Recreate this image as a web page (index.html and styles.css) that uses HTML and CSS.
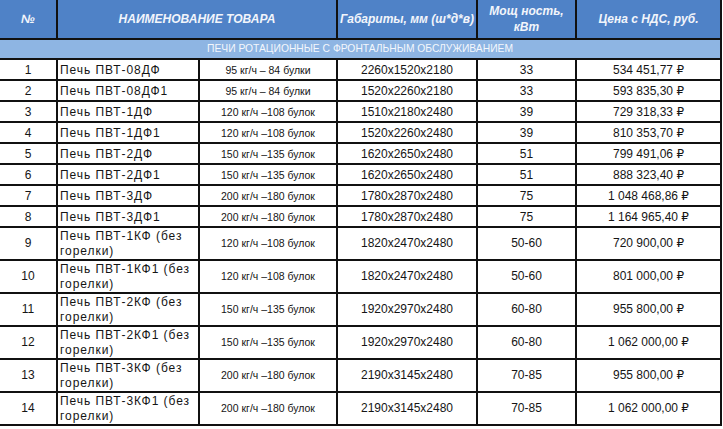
FILE: index.html
```html
<!DOCTYPE html>
<html lang="ru">
<head>
<meta charset="utf-8">
<title>Печи ротационные</title>
<link rel="stylesheet" href="styles.css">
</head>
<body>
<table class="price">
  <colgroup>
    <col class="c-num">
    <col class="c-name">
    <col class="c-cap">
    <col class="c-dim">
    <col class="c-pow">
    <col class="c-price">
  </colgroup>
  <thead>
    <tr class="head">
      <th>№</th>
      <th colspan="2">НАИМЕНОВАНИЕ ТОВАРА</th>
      <th>Габариты, мм (ш*д*в)</th>
      <th>Мощ ность,<br>кВт</th>
      <th>Цена с НДС, руб.</th>
    </tr>
    <tr class="sub">
      <td colspan="6">ПЕЧИ РОТАЦИОННЫЕ С ФРОНТАЛЬНЫМ ОБСЛУЖИВАНИЕМ</td>
    </tr>
  </thead>
  <tbody>
    <tr><td class="num">1</td><td class="name">Печь ПВТ-08ДФ</td><td class="cap">95 кг/ч – 84 булки</td><td class="ctr">2260x1520x2180</td><td class="ctr">33</td><td class="ctr">534 451,77 ₽</td></tr>
    <tr><td class="num">2</td><td class="name">Печь ПВТ-08ДФ1</td><td class="cap">95 кг/ч – 84 булки</td><td class="ctr">1520x2260x2180</td><td class="ctr">33</td><td class="ctr">593 835,30 ₽</td></tr>
    <tr><td class="num">3</td><td class="name">Печь ПВТ-1ДФ</td><td class="cap">120 кг/ч –108 булок</td><td class="ctr">1510x2180x2480</td><td class="ctr">39</td><td class="ctr">729 318,33 ₽</td></tr>
    <tr><td class="num">4</td><td class="name">Печь ПВТ-1ДФ1</td><td class="cap">120 кг/ч –108 булок</td><td class="ctr">1520x2260x2480</td><td class="ctr">39</td><td class="ctr">810 353,70 ₽</td></tr>
    <tr><td class="num">5</td><td class="name">Печь ПВТ-2ДФ</td><td class="cap">150 кг/ч –135 булок</td><td class="ctr">1620x2650x2480</td><td class="ctr">51</td><td class="ctr">799 491,06 ₽</td></tr>
    <tr><td class="num">6</td><td class="name">Печь ПВТ-2ДФ1</td><td class="cap">150 кг/ч –135 булок</td><td class="ctr">1620x2650x2480</td><td class="ctr">51</td><td class="ctr">888 323,40 ₽</td></tr>
    <tr><td class="num">7</td><td class="name">Печь ПВТ-3ДФ</td><td class="cap">200 кг/ч –180 булок</td><td class="ctr">1780x2870x2480</td><td class="ctr">75</td><td class="ctr">1 048 468,86 ₽</td></tr>
    <tr><td class="num">8</td><td class="name">Печь ПВТ-3ДФ1</td><td class="cap">200 кг/ч –180 булок</td><td class="ctr">1780x2870x2480</td><td class="ctr">75</td><td class="ctr">1 164 965,40 ₽</td></tr>
    <tr class="tall"><td class="num">9</td><td class="name">Печь ПВТ-1КФ (без горелки)</td><td class="cap">120 кг/ч –108 булок</td><td class="ctr">1820x2470x2480</td><td class="ctr">50-60</td><td class="ctr">720 900,00 ₽</td></tr>
    <tr class="tall"><td class="num">10</td><td class="name">Печь ПВТ-1КФ1 (без горелки)</td><td class="cap">120 кг/ч –108 булок</td><td class="ctr">1820x2470x2480</td><td class="ctr">50-60</td><td class="ctr">801 000,00 ₽</td></tr>
    <tr class="tall"><td class="num">11</td><td class="name">Печь ПВТ-2КФ (без горелки)</td><td class="cap">150 кг/ч –135 булок</td><td class="ctr">1920x2970x2480</td><td class="ctr">60-80</td><td class="ctr">955 800,00 ₽</td></tr>
    <tr class="tall"><td class="num">12</td><td class="name">Печь ПВТ-2КФ1 (без горелки)</td><td class="cap">150 кг/ч –135 булок</td><td class="ctr">1920x2970x2480</td><td class="ctr">60-80</td><td class="ctr">1 062 000,00 ₽</td></tr>
    <tr class="tall"><td class="num">13</td><td class="name">Печь ПВТ-3КФ (без горелки)</td><td class="cap">200 кг/ч –180 булок</td><td class="ctr">2190x3145x2480</td><td class="ctr">70-85</td><td class="ctr">955 800,00 ₽</td></tr>
    <tr class="tall"><td class="num">14</td><td class="name">Печь ПВТ-3КФ1 (без горелки)</td><td class="cap">200 кг/ч –180 булок</td><td class="ctr">2190x3145x2480</td><td class="ctr">70-85</td><td class="ctr">1 062 000,00 ₽</td></tr>
  </tbody>
</table>
</body>
</html>
```

FILE: styles.css
```css
html, body {
  margin: 0;
  padding: 0;
  background: #ffffff;
}

body {
  font-family: "Liberation Sans", Arial, "DejaVu Sans", sans-serif;
  color: #151515;
}

.price {
  border-collapse: collapse;
  table-layout: fixed;
  width: 721px;
  font-size: 12px;
}

.c-num { width: 57px; }
.c-name { width: 142px; }
.c-cap { width: 138px; }
.c-dim { width: 140px; }
.c-pow { width: 99px; }
.c-price { width: 145px; }

.price th,
.price td {
  border: 2px solid #111111;
  padding: 0 2px;
  vertical-align: middle;
  overflow: hidden;
}

.price tr > :first-child {
  border-left: 0;
}

.head th {
  background: #4f82c7;
  color: #f2f5fb;
  font-weight: bold;
  font-style: italic;
  font-size: 12px;
  line-height: 16px;
  text-align: center;
  height: 38px;
  border-top: 0;
}

.sub td {
  background: #8eb5e3;
  color: #f4f7fc;
  font-size: 10.3px;
  text-align: center;
  height: 18px;
  line-height: 14px;
}

tbody tr {
  height: 21px;
}

tbody td {
  height: 19px;
  line-height: 14px;
  background: #ffffff;
}

tbody tr.tall td {
  height: 31px;
  line-height: 15px;
}

.num {
  text-align: center;
  font-size: 12px;
}

.name {
  text-align: left;
  padding-left: 2px;
  letter-spacing: 0.95px;
}

.cap {
  text-align: center;
  font-size: 10.5px;
}

.ctr {
  text-align: center;
}
```
